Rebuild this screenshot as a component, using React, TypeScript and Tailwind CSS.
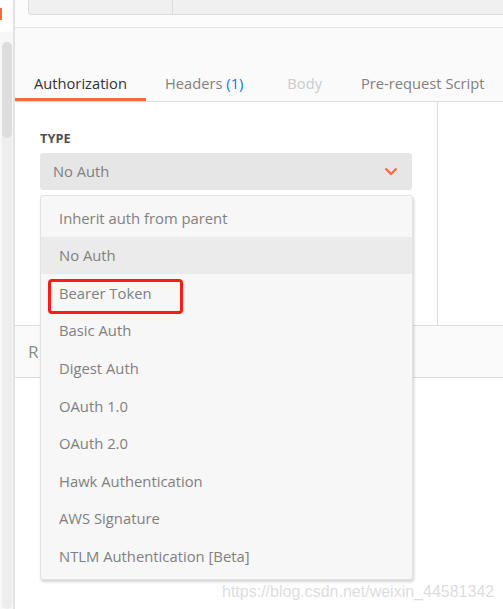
import React from "react";

const items = [
  "Inherit auth from parent",
  "No Auth",
  "Bearer Token",
  "Basic Auth",
  "Digest Auth",
  "OAuth 1.0",
  "OAuth 2.0",
  "Hawk Authentication",
  "AWS Signature",
  "NTLM Authentication [Beta]",
];

export default function App() {
  return (
    <div
      className="relative w-[503px] h-[609px] overflow-hidden flex bg-white"
      style={{ fontFamily: '"Open Sans", "Noto Sans", sans-serif' }}
    >
      {/* left strip */}
      <div className="w-[15px] h-full flex flex-col border-r-2 border-[#e2e2e2] bg-[#f7f7f7] shrink-0">
        <div className="h-[32px] bg-white relative shrink-0">
          <div className="absolute left-0 top-[8px] w-[2px] h-[12px] bg-[#f26b3a]" />
        </div>
        <div className="flex-1 pt-[10px] pl-[2px] pr-[1px]">
          <div className="w-[10px] h-full rounded-full bg-[#ededed] flex flex-col">
            <div className="w-[10px] h-[96px] rounded-full bg-[#dddddd]" />
          </div>
        </div>
      </div>

      {/* main */}
      <div className="flex-1 flex flex-col">
        {/* top */}
        <div className="h-[28px] bg-[#fcfcfc] border-b border-[#e4e4e4] shrink-0 pl-[13px]">
          <div className="h-[15px] flex border-l border-b border-[#dcdcdc] rounded-bl-[4px] bg-[#f0f0f0]">
            <div className="w-[144px] border-r border-[#dcdcdc]" />
            <div className="flex-1" />
          </div>
        </div>
        {/* tabs */}
        <div className="h-[74px] bg-[#fafafa] border-b border-[#dedede] shrink-0 flex items-end text-[14.7px]">
          <div className="w-[131px] h-[28px] pl-[19px] border-b-[3px] border-[#f26b3a] text-[#333333] leading-[20px] whitespace-nowrap">
            Authorization
          </div>
          <div className="pl-[19px] h-[28px] leading-[20px] text-[#808080] whitespace-nowrap">
            Headers <span className="text-[#097bed]">(1)</span>
          </div>
          <div className="pl-[44px] h-[28px] leading-[20px] text-[#cccccc]">Body</div>
          <div className="pl-[39px] h-[28px] leading-[20px] text-[#808080] whitespace-nowrap">
            Pre-request Script
          </div>
        </div>
        {/* auth area */}
        <div className="h-[223px] flex shrink-0">
          <div className="w-[423px] border-r border-[#dcdcdc] pl-[25px] pt-[28px]">
            <div className="text-[12.8px] font-bold leading-[16px] text-[#505050]">TYPE</div>
            <div className="mt-[7px] w-[372px] h-[37px] rounded-[3px] bg-[#e6e6e6] flex items-center justify-between pl-[13px] pr-[14px]">
              <span className="text-[14.7px] text-[#808080]">No Auth</span>
              <svg width="14" height="9" viewBox="0 0 14 9">
                <path d="M1.5 1.5 L7 7 L12.5 1.5" fill="none" stroke="#f26b3a" strokeWidth="2.2" />
              </svg>
            </div>
          </div>
          <div className="flex-1" />
        </div>
        {/* response bar */}
        <div className="h-[53px] border-t border-b border-[#dcdcdc] bg-[#fafafa] shrink-0 pl-[13px] flex items-center">
          <span className="text-[17px] text-[#8a8a8a]">R</span>
        </div>
        <div className="flex-1 bg-white" />
      </div>

      {/* dropdown menu */}
      <div className="absolute left-[40px] top-[195px] w-[373px] h-[385px] bg-[#f7f7f7] border border-[#e2e2e2] rounded-[3px] shadow-[1px_2px_3px_rgba(0,0,0,0.18)] pt-[3px]">
        {items.map((t, i) => (
          <div
            key={t}
            className={
              "h-[37.6px] flex items-center pl-[18px] text-[14.8px] text-[#808080] whitespace-nowrap " +
              (i === 1 ? "bg-[#ebebeb]" : "")
            }
          >
            {t}
          </div>
        ))}
      </div>

      {/* red highlight */}
      <div className="absolute left-[48px] top-[279px] w-[135px] h-[35px] border-[3px] border-[#ff1a1a] rounded-[4px]" />

      {/* watermark */}
      <div
        className="absolute left-[222px] top-[580px] text-[16px] text-[#dddddd] whitespace-nowrap"
        style={{ fontFamily: '"Liberation Sans", Arial, sans-serif' }}
      >
        https://blog.csdn.net/weixin_44581342
      </div>
    </div>
  );
}
